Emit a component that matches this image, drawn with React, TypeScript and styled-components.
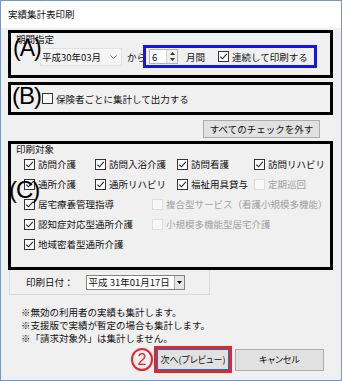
import styled, { createGlobalStyle } from "styled-components";

const GlobalStyle = createGlobalStyle`
  html, body {
    margin: 0;
    padding: 0;
    background: #ffffff;
  }
  body {
    font-family: "Noto Sans CJK JP", "Noto Sans", sans-serif;
    font-size: 9.5px;
    color: #111;
  }
`;

const Window = styled.div`
  width: 342px;
  height: 381px;
  box-sizing: border-box;
  border: 1px solid #7199cf;
  background: #f0f0f0;
  display: flex;
  flex-direction: column;
`;

const TitleBar = styled.div`
  height: 27px;
  flex: 0 0 27px;
  background: #fff;
  display: flex;
  align-items: center;
  padding: 0 0 2px 7px;
  box-sizing: border-box;
`;

const Body = styled.div`
  display: flex;
  flex-direction: column;
  padding: 2px 8px 0 7px;
`;

const MarkedBox = styled.div<{ $h: number; $gap?: number }>`
  position: relative;
  box-sizing: border-box;
  width: 325px;
  height: ${(p) => p.$h}px;
  margin-top: ${(p) => p.$gap ?? 0}px;
  border: 3px solid #000;
  display: flex;
  flex-direction: column;
`;

const Mark = styled.span<{ $x: number; $y: number; $size: number }>`
  position: absolute;
  left: ${(p) => p.$x}px;
  top: ${(p) => p.$y}px;
  font-family: "Liberation Sans", Arial, sans-serif;
  font-size: ${(p) => p.$size}px;
  line-height: 1;
  letter-spacing: -1px;
  color: #000;
  pointer-events: none;
  z-index: 2;
`;

const Legend = styled.div<{ $h: number }>`
  height: ${(p) => p.$h}px;
  line-height: ${(p) => p.$h}px;
  padding-left: 5px;
`;

const PeriodRow = styled.div`
  height: 23px;
  display: flex;
  align-items: center;
  padding-left: 29px;
`;

const Combo = styled.div`
  width: 82px;
  height: 18px;
  box-sizing: border-box;
  background: #f5f5f5;
  border: 1px solid #e2e2e2;
  display: flex;
  align-items: center;
  justify-content: space-between;
  padding: 0 4px 0 1px;
`;

const Kara = styled.span`
  margin-left: 5px;
  white-space: nowrap;
`;

const Highlight = styled.div`
  position: relative;
  margin-left: -3px;
  width: 174px;
  height: 23px;
  box-sizing: border-box;
  border: 3px solid #1717e4;
  display: flex;
  align-items: center;
  padding-left: 3px;
`;

const Spinner = styled.div`
  width: 29px;
  height: 15px;
  box-sizing: border-box;
  background: #fff;
  border: 1px solid #b4b4b4;
  display: flex;
  align-items: center;
  justify-content: space-between;
  padding-left: 2px;
`;

const SpinButtons = styled.div`
  width: 10px;
  height: 13px;
  display: flex;
  flex-direction: column;
  border-left: 1px solid #d0d0d0;
  background: #f0f0f0;
`;

const SpinHalf = styled.div`
  flex: 1;
  display: flex;
  align-items: center;
  justify-content: center;
`;

const Label = styled.span<{ $gap?: number }>`
  margin-left: ${(p) => p.$gap ?? 0}px;
  white-space: nowrap;
`;

const CheckItem = styled.div<{ $w?: number; $disabled?: boolean; $gap?: number }>`
  display: flex;
  align-items: center;
  gap: 3px;
  flex: ${(p) => (p.$w ? `0 0 ${p.$w}px` : "0 0 auto")};
  margin-left: ${(p) => p.$gap ?? 0}px;
  color: ${(p) => (p.$disabled ? "#a0a0a0" : "inherit")};
  white-space: nowrap;
`;

const Box = styled.span<{ $disabled?: boolean }>`
  width: 11px;
  height: 11px;
  flex: 0 0 11px;
  box-sizing: border-box;
  border: 1px solid ${(p) => (p.$disabled ? "#dedede" : "#333")};
  background: ${(p) => (p.$disabled ? "#f8f8f8" : "#fff")};
  display: flex;
  align-items: center;
  justify-content: center;
`;

const InsurerRow = styled.div`
  flex: 1;
  display: flex;
  align-items: center;
  padding-left: 31px;
`;

const ClearButton = styled.div`
  align-self: flex-end;
  margin: 5px 13px 0 0;
  width: 117px;
  height: 18px;
  box-sizing: border-box;
  background: #e1e1e1;
  border: 1px solid #adadad;
  display: flex;
  align-items: center;
  justify-content: center;
`;

const TargetRow = styled.div`
  height: 20px;
  display: flex;
  align-items: center;
  padding-left: 13px;
`;

const DateGroup = styled.div`
  width: 201px;
  height: 25px;
  box-sizing: border-box;
  margin-left: 1px;
  border: 1px solid #d9d9d9;
  border-top: none;
  display: flex;
  align-items: center;
  padding-left: 16px;
`;

const DateField = styled.div`
  margin-left: 12px;
  width: 99px;
  height: 15px;
  box-sizing: border-box;
  background: #fff;
  border: 1px solid #828282;
  display: flex;
  align-items: center;
  justify-content: space-between;
  padding-left: 2px;
`;

const DropButton = styled.div`
  width: 10px;
  height: 13px;
  box-sizing: border-box;
  background: #e5e5e5;
  border-left: 1px solid #b0b0b0;
  display: flex;
  align-items: center;
  justify-content: center;
`;

const Notes = styled.div`
  margin-top: 11px;
  padding-left: 13px;
  line-height: 13px;
  white-space: nowrap;
`;

const ButtonRow = styled.div`
  margin-top: 1px;
  height: 27px;
  display: flex;
  align-items: center;
  padding-left: 123px;
`;

const Circled = styled.span`
  width: 22px;
  height: 23px;
  box-sizing: border-box;
  border: 2px solid #e3262c;
  border-radius: 50%;
  color: #e3262c;
  font-family: "Liberation Sans", Arial, sans-serif;
  font-size: 16px;
  line-height: 1;
  display: flex;
  align-items: center;
  justify-content: center;
`;

const RedFrame = styled.div`
  margin-left: 1px;
  width: 78px;
  height: 27px;
  box-sizing: border-box;
  border: 3px solid #e3262c;
  display: flex;
`;

const DialogButton = styled.div<{ $default?: boolean; $w?: number; $gap?: number }>`
  flex: ${(p) => (p.$w ? `0 0 ${p.$w}px` : "1")};
  margin-left: ${(p) => p.$gap ?? 0}px;
  height: ${(p) => (p.$default ? "21px" : "22px")};
  box-sizing: border-box;
  background: #e1e1e1;
  border: 1px solid ${(p) => (p.$default ? "#0078d7" : "#adadad")};
  display: flex;
  align-items: center;
  justify-content: center;
  font-size: 9px;
  font-feature-settings: "palt";
  white-space: nowrap;
`;

function Check({ on, disabled }: { on?: boolean; disabled?: boolean }) {
  return (
    <Box $disabled={disabled}>
      {on && (
        <svg width="9" height="9" viewBox="0 0 9 9">
          <path d="M1.3 4.6 L3.5 6.8 L7.8 1.8" fill="none" stroke="#222" strokeWidth="1.1" />
        </svg>
      )}
    </Box>
  );
}

type Item = { label: string; on?: boolean; disabled?: boolean; w?: number };

const targetRows: Item[][] = [
  [
    { label: "訪問介護", on: true, w: 71 },
    { label: "訪問入浴介護", on: true, w: 82 },
    { label: "訪問看護", on: true, w: 77 },
    { label: "訪問リハビリ", on: true },
  ],
  [
    { label: "通所介護", on: true, w: 71 },
    { label: "通所リハビリ", on: true, w: 82 },
    { label: "福祉用具貸与", on: true, w: 77 },
    { label: "定期巡回", disabled: true },
  ],
  [
    { label: "居宅療養管理指導", on: true, w: 128 },
    { label: "複合型サービス（看護小規模多機能）", disabled: true },
  ],
  [
    { label: "認知症対応型通所介護", on: true, w: 128 },
    { label: "小規模多機能型居宅介護", disabled: true },
  ],
  [{ label: "地域密着型通所介護", on: true }],
];

export default function App() {
  return (
    <>
      <GlobalStyle />
      <Window>
        <TitleBar>実績集計表印刷</TitleBar>
        <Body>
          <MarkedBox $h={48}>
            <Mark $x={2} $y={4} $size={23}>(A)</Mark>
            <Legend $h={12}>期間指定</Legend>
            <PeriodRow>
              <Combo>
                <span>平成30年03月</span>
                <svg width="7" height="4" viewBox="0 0 7 4">
                  <path d="M0.5 0.5 L3.5 3.5 L6.5 0.5" fill="none" stroke="#707070" strokeWidth="1" />
                </svg>
              </Combo>
              <Kara>から</Kara>
              <Highlight>
                <Spinner>
                  <span>6</span>
                  <SpinButtons>
                    <SpinHalf>
                      <svg width="5" height="3" viewBox="0 0 5 3">
                        <path d="M0 3 L2.5 0 L5 3 Z" fill="#333" />
                      </svg>
                    </SpinHalf>
                    <SpinHalf>
                      <svg width="5" height="3" viewBox="0 0 5 3">
                        <path d="M0 0 L2.5 3 L5 0 Z" fill="#333" />
                      </svg>
                    </SpinHalf>
                  </SpinButtons>
                </Spinner>
                <Label $gap={8}>月間</Label>
                <CheckItem $gap={13}>
                  <Check on />
                  <span>連続して印刷する</span>
                </CheckItem>
              </Highlight>
            </PeriodRow>
          </MarkedBox>

          <MarkedBox $h={33} $gap={4}>
            <Mark $x={1} $y={-1} $size={24}>(B)</Mark>
            <InsurerRow>
              <CheckItem>
                <Check />
                <span>保険者ごとに集計して出力する</span>
              </CheckItem>
            </InsurerRow>
          </MarkedBox>

          <ClearButton>すべてのチェックを外す</ClearButton>

          <MarkedBox $h={129} $gap={3}>
            <Mark $x={-2} $y={34} $size={24}>(C)</Mark>
            <Legend $h={10}>印刷対象</Legend>
            {targetRows.map((row, i) => (
              <TargetRow key={i}>
                {row.map((item) => (
                  <CheckItem key={item.label} $w={item.w} $disabled={item.disabled}>
                    <Check on={item.on} disabled={item.disabled} />
                    <span>{item.label}</span>
                  </CheckItem>
                ))}
              </TargetRow>
            ))}
          </MarkedBox>

          <DateGroup>
            <span>印刷日付：</span>
            <DateField>
              <span>平成 31年01月17日</span>
              <DropButton>
                <svg width="5" height="3" viewBox="0 0 5 3">
                  <path d="M0 0 L2.5 3 L5 0 Z" fill="#000" />
                </svg>
              </DropButton>
            </DateField>
          </DateGroup>

          <Notes>
            <div>※無効の利用者の実績も集計します。</div>
            <div>※支援版で実績が暫定の場合も集計します。</div>
            <div>※「請求対象外」は集計しません。</div>
          </Notes>

          <ButtonRow>
            <Circled>2</Circled>
            <RedFrame>
              <DialogButton $default>次へ(プレビュー)</DialogButton>
            </RedFrame>
            <DialogButton $w={89} $gap={3}>キャンセル</DialogButton>
          </ButtonRow>
        </Body>
      </Window>
    </>
  );
}
